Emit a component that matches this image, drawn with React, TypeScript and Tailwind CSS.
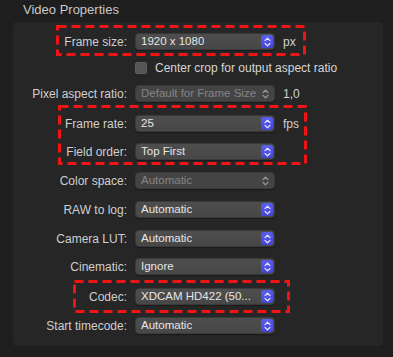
import React from 'react'

const font = { fontFamily: '"Liberation Sans", Arial, sans-serif' }

// little up/down chevron pair used in the popup buttons
const Chevrons = ({ color }: { color: string }) => (
  <svg width="7" height="10" viewBox="0 0 7 10" fill="none">
    <path d="M1 3.6 L3.5 1.2 L6 3.6" stroke={color} strokeWidth="1.2" strokeLinecap="round" strokeLinejoin="round" />
    <path d="M1 6.4 L3.5 8.8 L6 6.4" stroke={color} strokeWidth="1.2" strokeLinecap="round" strokeLinejoin="round" />
  </svg>
)

type RowProps = {
  label: string
  value: string
  disabled?: boolean
  suffix?: string
  className?: string
}

const Row = ({ label, value, disabled, suffix, className = '' }: RowProps) => (
  <div className={`flex items-center h-[17px] ${className}`}>
    <div className="w-[114px] text-right text-[12px] text-[#cfcfcf] whitespace-nowrap">{label}</div>
    <div
      className={`relative ml-[8px] w-[140px] h-[17px] rounded-[4px] flex items-center pl-[5px] pr-[13px] border border-[#3a3a3a] shadow-[0_1px_1px_rgba(0,0,0,0.35)] ${
        disabled ? 'bg-[#444444]' : 'bg-gradient-to-b from-[#4e4e4e] to-[#474747]'
      }`}
    >
      <span className={`text-[11.5px] whitespace-nowrap overflow-hidden ${disabled ? 'text-[#858585]' : 'text-[#e6e6e6]'}`}>
        {value}
      </span>
      {disabled ? (
        <div className="absolute right-[3px] top-[2px] w-[12px] h-[11px] flex items-center justify-center">
          <Chevrons color="#9a9a9a" />
        </div>
      ) : (
        <div className="absolute right-[1px] top-[1px] w-[12px] h-[13px] rounded-[3px] bg-gradient-to-b from-[#5a5ef0] to-[#4446d8] flex items-center justify-center">
          <Chevrons color="#e8e8ff" />
        </div>
      )}
    </div>
    {suffix && <div className="ml-[8px] text-[12px] text-[#d2d2d2]">{suffix}</div>}
  </div>
)

// red dashed annotation box drawn over the panel
const DashBox = ({ x, y, w, h }: { x: number; y: number; w: number; h: number }) => (
  <svg className="absolute pointer-events-none" style={{ left: x, top: y }} width={w} height={h}>
    <rect
      x="1.5"
      y="1.5"
      width={w - 3}
      height={h - 3}
      fill="none"
      stroke="#f21414"
      strokeWidth="3"
      strokeDasharray="9 5"
    />
  </svg>
)

export default function App() {
  return (
    <div className="w-[393px] h-[357px] bg-[#1e1e1e] overflow-hidden" style={font}>
      <div className="h-[22px] pl-[23px] pt-[1px] text-[13px] text-[#c9c9c9] leading-[18px]">Video Properties</div>
      <div className="relative ml-[13px] w-[370px] h-[324px] bg-[#262626] rounded-[4px] pt-[11px]">
        <Row label="Frame size:" value="1920 x 1080" suffix="px" />
        <div className="flex items-center h-[17px] mt-[9px]">
          <div className="ml-[122px] w-[12px] h-[12px] rounded-[2px] bg-[#555555] border border-[#5e5e5e]" />
          <div className="ml-[8px] text-[12px] text-[#d6d6d6] whitespace-nowrap">Center crop for output aspect ratio</div>
        </div>
        <Row label="Pixel aspect ratio:" value="Default for Frame Size" disabled suffix="1,0" className="mt-[9px]" />
        <Row label="Frame rate:" value="25" suffix="fps" className="mt-[13px]" />
        <Row label="Field order:" value="Top First" className="mt-[11px]" />
        <Row label="Color space:" value="Automatic" disabled className="mt-[12px]" />
        <Row label="RAW to log:" value="Automatic" className="mt-[12px]" />
        <Row label="Camera LUT:" value="Automatic" className="mt-[12px]" />
        <Row label="Cinematic:" value="Ignore" className="mt-[11px]" />
        <Row label="Codec:" value="XDCAM HD422 (50..." className="mt-[13px]" />
        <Row label="Start timecode:" value="Automatic" className="mt-[12px]" />

        <DashBox x={43} y={3} w={250} h={31} />
        <DashBox x={45} y={83} w={249} h={60} />
        <DashBox x={60} y={258} w={217} h={33} />
      </div>
    </div>
  )
}
